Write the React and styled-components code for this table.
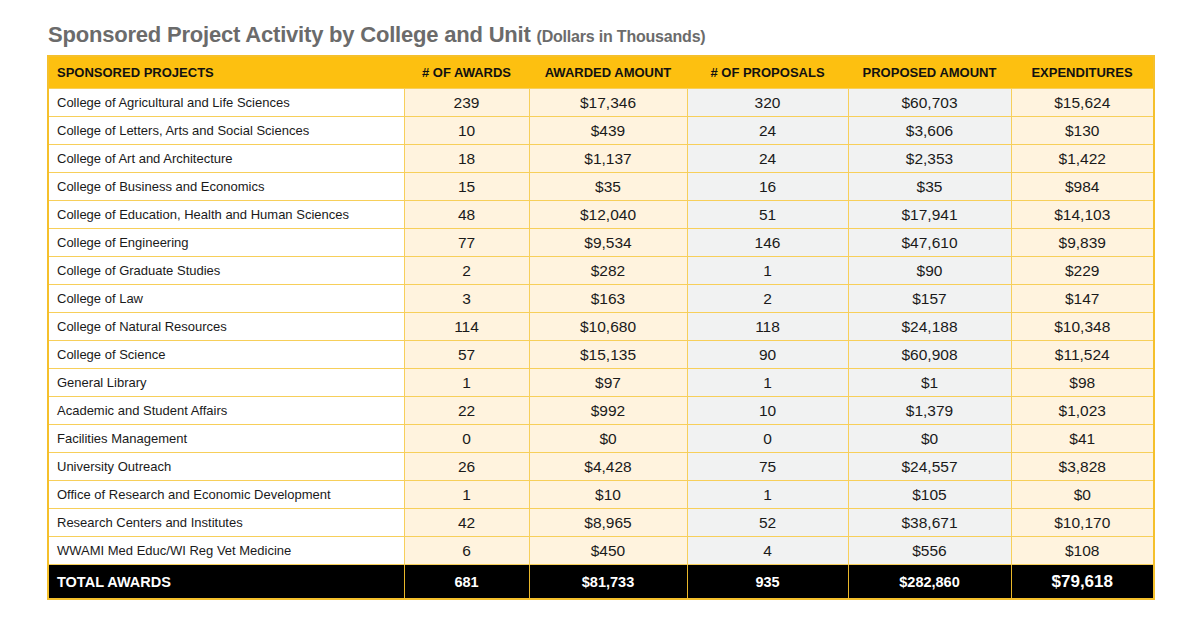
import React from "react";
import styled, { createGlobalStyle } from "styled-components";

const GlobalStyle = createGlobalStyle`
  body {
    margin: 0;
    background-color: #ffffff;
    font-family: "Liberation Sans", Arial, sans-serif;
  }
`;

const Page = styled.div`
  width: 1200px;
  height: 629px;
  padding: 22px 47px 0 47px;
  box-sizing: border-box;
`;

const Title = styled.h1`
  margin: 0 0 5px 1px;
  font-size: 22px;
  font-weight: 700;
  color: #6b6b6b;
  letter-spacing: -0.2px;
  line-height: 26px;
`;

const Subtitle = styled.span`
  font-size: 16px;
`;

const Table = styled.table`
  width: 1106px;
  border-collapse: collapse;
  table-layout: fixed;
  border: 2px solid #f5c02c;
`;

const HeadCell = styled.th`
  height: 31px;
  padding: 0 8px;
  background-color: #fdc010;
  color: #111111;
  font-size: 13px;
  font-weight: 700;
  text-transform: uppercase;
  text-align: ${(props) => (props.$left ? "left" : "center")};
  white-space: nowrap;
`;

const fills = {
  white: "#ffffff",
  cream: "#fff3de",
  gray: "#f1f2f2",
};

const Cell = styled.td`
  height: 27px;
  padding: 0 8px;
  border: 1px solid #f7cf5a;
  background-color: ${(props) => fills[props.$fill]};
  color: #1a1a1a;
  font-size: ${(props) => (props.$left ? "13px" : "15.5px")};
  text-align: ${(props) => (props.$left ? "left" : "center")};
  white-space: nowrap;
`;

const TotalCell = styled.td`
  height: 33px;
  padding: 0 8px;
  background-color: #000000;
  border: 1px solid #e9b72a;
  color: #ffffff;
  font-weight: 700;
  font-size: ${(props) => (props.$big ? "17px" : "14.5px")};
  text-align: ${(props) => (props.$left ? "left" : "center")};
`;

const columns = [
  { label: "Sponsored Projects", width: 356, fill: "white", left: true },
  { label: "# of Awards", width: 125, fill: "cream" },
  { label: "Awarded Amount", width: 158, fill: "cream" },
  { label: "# of Proposals", width: 161, fill: "gray" },
  { label: "Proposed Amount", width: 163, fill: "gray" },
  { label: "Expenditures", width: 143, fill: "cream" },
];

const rows = [
  ["College of Agricultural and Life Sciences", "239", "$17,346", "320", "$60,703", "$15,624"],
  ["College of Letters, Arts and Social Sciences", "10", "$439", "24", "$3,606", "$130"],
  ["College of Art and Architecture", "18", "$1,137", "24", "$2,353", "$1,422"],
  ["College of Business and Economics", "15", "$35", "16", "$35", "$984"],
  ["College of Education, Health and Human Sciences", "48", "$12,040", "51", "$17,941", "$14,103"],
  ["College of Engineering", "77", "$9,534", "146", "$47,610", "$9,839"],
  ["College of Graduate Studies", "2", "$282", "1", "$90", "$229"],
  ["College of Law", "3", "$163", "2", "$157", "$147"],
  ["College of Natural Resources", "114", "$10,680", "118", "$24,188", "$10,348"],
  ["College of Science", "57", "$15,135", "90", "$60,908", "$11,524"],
  ["General Library", "1", "$97", "1", "$1", "$98"],
  ["Academic and Student Affairs", "22", "$992", "10", "$1,379", "$1,023"],
  ["Facilities Management", "0", "$0", "0", "$0", "$41"],
  ["University Outreach", "26", "$4,428", "75", "$24,557", "$3,828"],
  ["Office of Research and Economic Development", "1", "$10", "1", "$105", "$0"],
  ["Research Centers and Institutes", "42", "$8,965", "52", "$38,671", "$10,170"],
  ["WWAMI Med Educ/WI Reg Vet Medicine", "6", "$450", "4", "$556", "$108"],
];

const totals = ["Total Awards", "681", "$81,733", "935", "$282,860", "$79,618"];

const App = () => {
  return (
    <Page>
      <GlobalStyle />
      <Title>
        Sponsored Project Activity by College and Unit{" "}
        <Subtitle>(Dollars in Thousands)</Subtitle>
      </Title>
      <Table>
        <colgroup>
          {columns.map((col) => (
            <col key={col.label} style={{ width: col.width }} />
          ))}
        </colgroup>
        <thead>
          <tr>
            {columns.map((col) => (
              <HeadCell key={col.label} $left={col.left}>
                {col.label}
              </HeadCell>
            ))}
          </tr>
        </thead>
        <tbody>
          {rows.map((row) => (
            <tr key={row[0]}>
              {row.map((value, i) => (
                <Cell key={i} $fill={columns[i].fill} $left={columns[i].left}>
                  {value}
                </Cell>
              ))}
            </tr>
          ))}
          <tr>
            {totals.map((value, i) => (
              <TotalCell key={i} $left={i === 0} $big={i === 5}>
                {i === 0 ? value.toUpperCase() : value}
              </TotalCell>
            ))}
          </tr>
        </tbody>
      </Table>
    </Page>
  );
};

export default App;
